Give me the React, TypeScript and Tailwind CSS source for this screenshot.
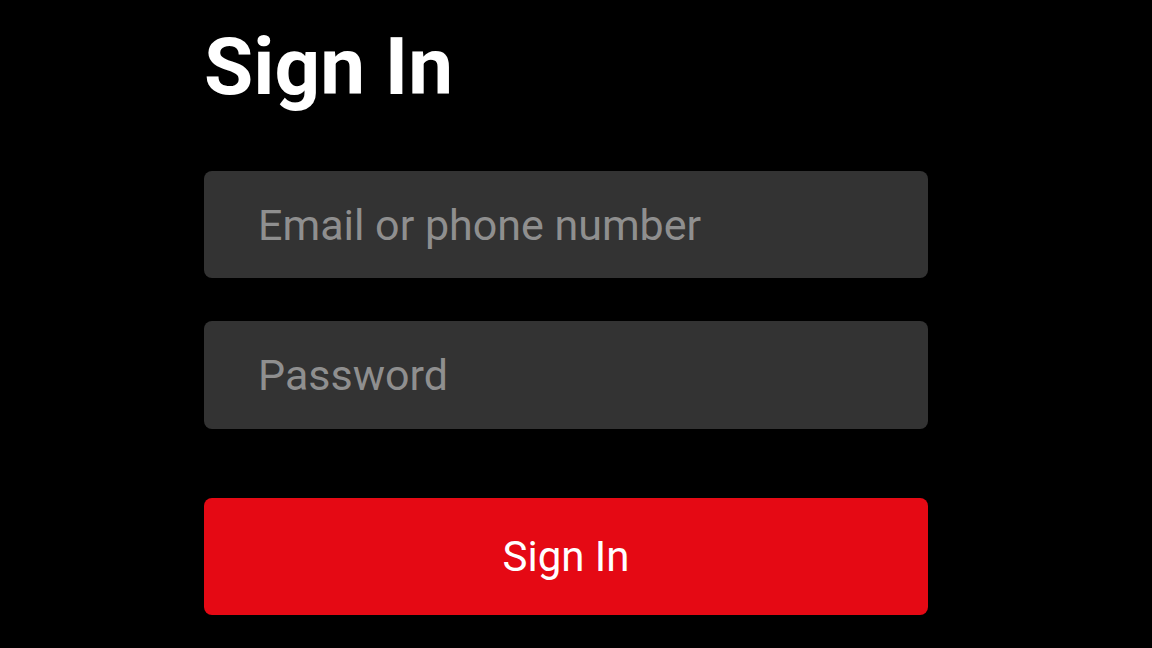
export default function App() {
  return (
    <div className="min-h-screen w-full bg-black font-['Roboto',sans-serif]">
      <div className="ml-[204px] w-[724px] pt-[27px]">
        <h1 className="text-[80px] font-bold leading-none text-white">Sign In</h1>

        <form className="mt-[64px] flex flex-col" onSubmit={(e) => e.preventDefault()}>
          <input
            type="text"
            placeholder="Email or phone number"
            className="h-[107px] w-full rounded-lg bg-[#333333] px-[54px] text-[43px] text-white outline-none placeholder:text-[#8f8f8f]"
          />
          <input
            type="password"
            placeholder="Password"
            className="mt-[43px] h-[108px] w-full rounded-lg bg-[#333333] px-[54px] text-[43px] text-white outline-none placeholder:text-[#8f8f8f]"
          />
          <button
            type="submit"
            className="mt-[69px] h-[117px] w-full rounded-lg bg-[#e50914] text-[42px] font-normal text-white"
          >
            Sign In
          </button>
        </form>
      </div>
    </div>
  );
}
